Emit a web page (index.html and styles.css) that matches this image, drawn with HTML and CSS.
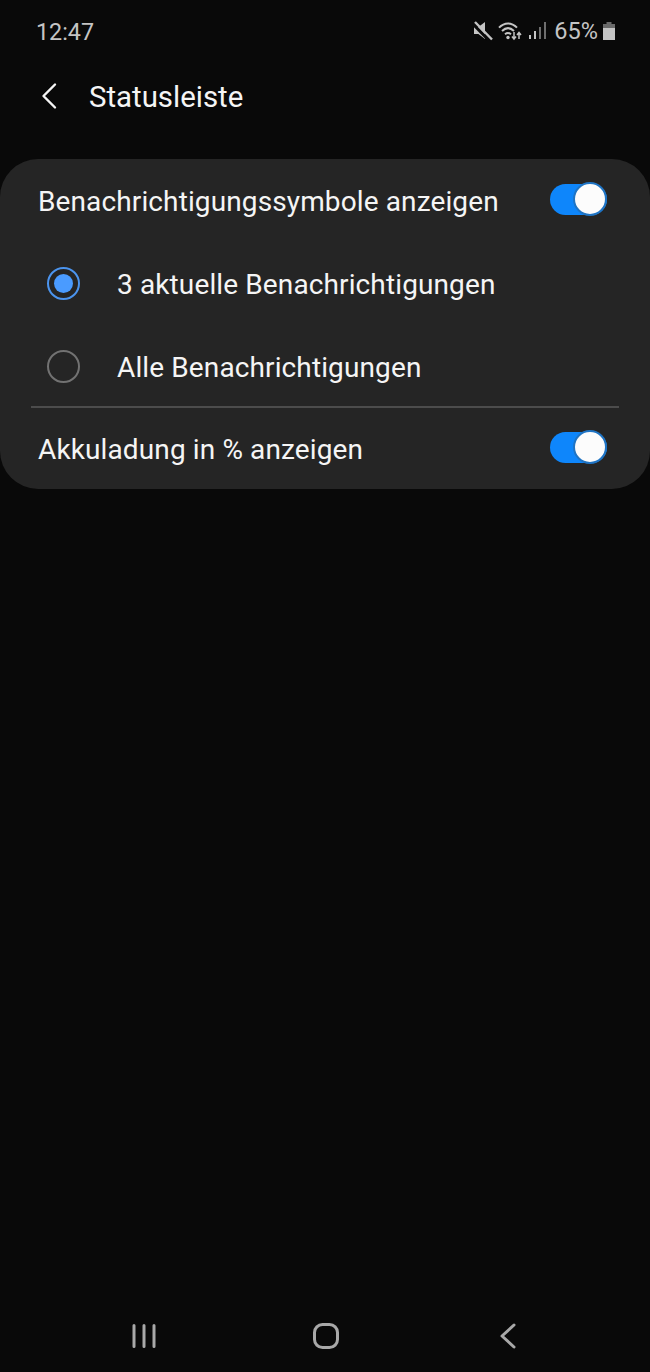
FILE: index.html
```html
<!DOCTYPE html>
<html lang="de">
<head>
    <meta charset="UTF-8">
    <meta name="viewport" content="width=device-width, initial-scale=1.0">
    <title>Statusleiste</title>
    <link rel="stylesheet" href="styles.css">
</head>
<body>
    <div class="screen">
        <div class="status-bar">
            <span class="clock">12:47</span>
            <div class="status-icons">
                <!-- muted speaker -->
                <svg class="icon-mute" width="20" height="20" viewBox="0 0 20 20">
                    <path d="M1 6h4.400L12 1v17l-6.600-5H1z" fill="#c4c4c4"/>
                    <path d="M0 3l16 16.500" stroke="#0a0a0a" stroke-width="3"/>
                    <path d="M2 1l17 17.500" stroke="#c4c4c4" stroke-width="2.400"/>
                </svg>
                <!-- wifi with up/down arrows -->
                <svg class="icon-wifi" width="25" height="20" viewBox="0 0 25 20">
                    <g fill="none" stroke="#c4c4c4" stroke-width="2">
                        <path d="M1 6.600C6.400 1 13.600 1 19 6.600"/>
                        <path d="M4 10C7.800 6.400 12.200 6.400 16 10"/>
                        <path d="M7 13.200C9 11.600 11 11.600 13 13.200"/>
                    </g>
                    <circle cx="10" cy="16.500" r="1.700" fill="#c4c4c4"/>
                    <path d="M16 11v7M14 15.500l2 2.600 2-2.600M21 18v-6.500M19 14l2-2.600 2 2.600" fill="none" stroke="#c4c4c4" stroke-width="1.500"/>
                </svg>
                <!-- signal bars, upper ones unfilled -->
                <svg class="icon-signal" width="18" height="20" viewBox="0 0 18 20">
                    <rect x="1" y="14" width="2" height="4" fill="#c4c4c4"/>
                    <rect x="6" y="10" width="2" height="8" fill="#c4c4c4"/>
                    <rect x="11" y="6" width="2" height="12" fill="#6e6e6e"/>
                    <rect x="16" y="1" width="2" height="17" fill="#6e6e6e"/>
                </svg>
                <span class="battery-text">65%</span>
                <svg class="icon-battery" width="14" height="20" viewBox="0 0 14 20">
                    <path d="M4.500 1h5v2H13v4H1V3h3.500z" fill="#6a6a6a"/>
                    <rect x="1" y="7" width="12" height="12" fill="#c4c4c4"/>
                </svg>
            </div>
        </div>

        <div class="title-bar">
            <svg class="back-arrow" width="18" height="28" viewBox="0 0 18 28">
                <path d="M15 2.500L3.500 14 15 25.500" fill="none" stroke="#f5f5f5" stroke-width="2.400" stroke-linecap="round" stroke-linejoin="round"/>
            </svg>
            <h1 class="title">Statusleiste</h1>
        </div>

        <div class="card">
            <div class="row">
                <span class="label">Benachrichtigungssymbole anzeigen</span>
                <div class="switch"><div class="knob"></div></div>
            </div>
            <div class="row radio-row">
                <div class="radio selected"><div class="dot"></div></div>
                <span class="label">3 aktuelle Benachrichtigungen</span>
            </div>
            <div class="row radio-row">
                <div class="radio"></div>
                <span class="label">Alle Benachrichtigungen</span>
            </div>
            <div class="divider"></div>
            <div class="row row-last">
                <span class="label">Akkuladung in % anzeigen</span>
                <div class="switch"><div class="knob"></div></div>
            </div>
        </div>

        <div class="nav-bar">
            <svg width="26" height="26" viewBox="0 0 26 26">
                <path d="M3 2.500v21M13 2.500v21M23 2.500v21" stroke="#a8a8a8" stroke-width="3" stroke-linecap="round"/>
            </svg>
            <svg width="26" height="26" viewBox="0 0 26 26">
                <rect x="1.500" y="1.500" width="23" height="23" rx="8" fill="none" stroke="#a8a8a8" stroke-width="3"/>
            </svg>
            <svg class="nav-back" width="16" height="26" viewBox="0 0 16 26">
                <path d="M14 2L2 13l12 11" fill="none" stroke="#a8a8a8" stroke-width="3" stroke-linecap="round" stroke-linejoin="round"/>
            </svg>
        </div>
    </div>
</body>
</html>
```

FILE: styles.css
```css
* {
    box-sizing: border-box;
}
body {
    margin: 0;
    background-color: #090909;
    font-family: Roboto, "Liberation Sans", sans-serif;
}
.screen {
    display: flex;
    flex-direction: column;
    width: 650px;
    height: 1372px;
    overflow: hidden;
}
.status-bar {
    display: flex;
    align-items: center;
    justify-content: space-between;
    height: 62px;
    padding: 0 34px 0 36px;
    color: #c4c4c4;
}
.clock {
    margin-top: 1px;
    font-size: 23.3px;
}
.status-icons {
    display: flex;
    align-items: center;
}
.icon-wifi {
    margin-left: 5px;
}
.icon-signal {
    margin-left: 5px;
}
.battery-text {
    margin-left: 8px;
    font-size: 23.5px;
}
.icon-battery {
    margin-left: 4px;
}
.title-bar {
    display: flex;
    align-items: center;
    height: 68px;
    padding-left: 40px;
}
.back-arrow {
    margin-right: 31px;
}
.title {
    margin: 1px 0 0;
    font-size: 29.4px;
    font-weight: 400;
    color: #f5f5f5;
}
.card {
    margin-top: 29px;
    height: 330px;
    background-color: #252525;
    border-radius: 38px;
}
.row {
    display: flex;
    align-items: center;
    justify-content: space-between;
    height: 83px;
    padding: 0 43px 0 38px;
}
.radio-row {
    justify-content: flex-start;
    padding-left: 47px;
}
.row-last {
    height: 81px;
}
.label {
    margin-top: 1px;
    font-size: 28px;
    letter-spacing: 0.12px;
    color: #f5f5f5;
}
.switch {
    position: relative;
    width: 57px;
    height: 31px;
    margin-top: -3px;
    background-color: #0e86fb;
    border-radius: 16px;
}
.knob {
    position: absolute;
    top: -2px;
    right: 0;
    width: 34px;
    height: 34px;
    background-color: #fcfcfc;
    border: 2px solid #1f74c4;
    border-radius: 50%;
}
.radio {
    display: flex;
    align-items: center;
    justify-content: center;
    width: 33px;
    height: 33px;
    margin-right: 37px;
    border: 2px solid #727272;
    border-radius: 50%;
}
.radio.selected {
    border-color: #4b94ee;
}
.dot {
    width: 19px;
    height: 19px;
    background-color: #4a9bff;
    border-radius: 50%;
}
.divider {
    height: 2px;
    margin: -2px 31px 0;
    background-color: #4c4c4c;
}
.nav-bar {
    display: flex;
    align-items: center;
    gap: 156px;
    margin: auto 0 0 131px;
    padding-bottom: 23px;
}
.nav-back {
    margin-left: 5px;
}
```
